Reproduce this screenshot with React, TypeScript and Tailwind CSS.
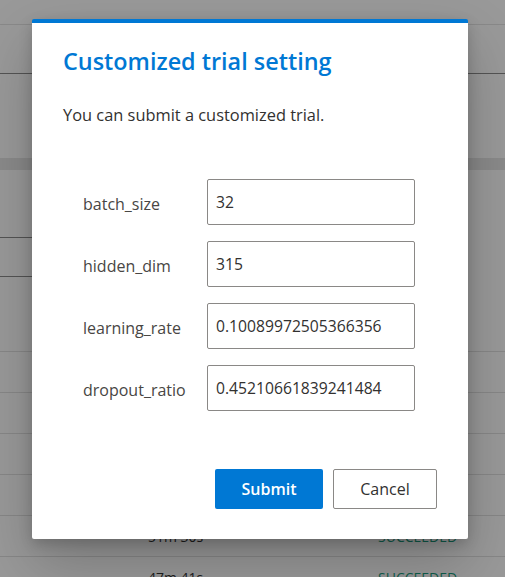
import React from "react";

const params = [
  { name: "batch_size", value: "32" },
  { name: "hidden_dim", value: "315" },
  { name: "learning_rate", value: "0.10089972505366356" },
  { name: "dropout_ratio", value: "0.45210661839241484" },
];

const rows = ["", "", "", "", "51m 30s", "47m 41s"];

function BackgroundPage() {
  return (
    <div className="bg-white">
      <div className="h-[25px] border-b border-[#e4e4e4]" />
      <div className="h-[49px] border-b border-[#8c8c8c]" />
      <div className="h-[84px]" />
      <div className="h-[12px] bg-[#e6e6e6]" />
      <div className="h-[68px] w-1/2 border-b border-[#8c8c8c]" />
      <div className="h-[39px] w-1/2 border-b border-[#8c8c8c]" />
      <div className="h-[74px]" />
      {rows.map((time, i) => (
        <div key={i} className="flex h-[41px] items-center border-t border-[#e2e2e2] text-[14px]">
          <span className="w-[148px]" />
          <span className="w-[230px] text-[#333]">{time}</span>
          <span className="text-[#1a9e80]">{time ? "SUCCEEDED" : ""}</span>
        </div>
      ))}
    </div>
  );
}

export default function App() {
  return (
    <div className="relative h-[577px] w-full overflow-hidden font-['Open_Sans',sans-serif]">
      <BackgroundPage />

      <div className="absolute inset-0 bg-black/40 pl-[32px] pt-[19px]">
        <div className="w-[436px] rounded-[2px] border-t-[4px] border-[#0078d4] bg-white px-[31px] pb-[30px] pt-[22px] shadow-[0_25px_57px_0_rgba(0,0,0,0.22),0_5px_14px_0_rgba(0,0,0,0.18)]">
          <h2 className="text-[23.4px] font-semibold leading-[32px] text-[#0078d4]">Customized trial setting</h2>
          <p className="mt-[26px] text-[16.4px] leading-[24px] text-[#323130]">You can submit a customized trial.</p>

          <div className="mt-[52px] flex flex-col gap-[16px] pl-[20px]">
            {params.map((p) => (
              <div key={p.name} className="flex items-center">
                <label className="w-[124px] pt-[4px] text-[16px] text-[#484644]">{p.name}</label>
                <input
                  readOnly
                  defaultValue={p.value}
                  className="h-[46px] w-[208px] rounded-[2px] border border-[#8a8886] px-[8px] text-[15.7px] text-[#323130] outline-none"
                />
              </div>
            ))}
          </div>

          <div className="mt-[58px] flex justify-end gap-[10px]">
            <button className="h-[40px] w-[108px] rounded-[2px] bg-[#0078d4] text-[16px] font-semibold text-white">Submit</button>
            <button className="h-[40px] w-[104px] rounded-[2px] border border-[#8a8886] bg-white text-[16px] text-[#323130]">Cancel</button>
          </div>
        </div>
      </div>
    </div>
  );
}
